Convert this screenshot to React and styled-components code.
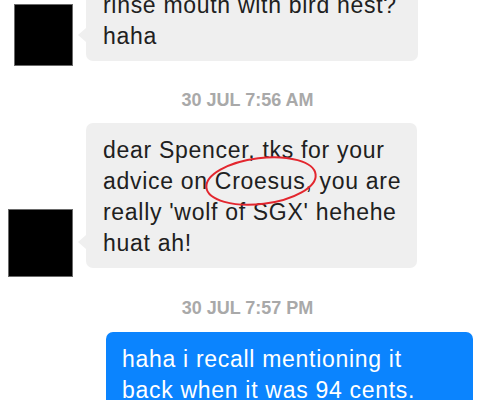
import React from "react";
import styled, { createGlobalStyle } from "styled-components";

const Global = createGlobalStyle`
  html, body { margin: 0; padding: 0; background: #ffffff; }
  body { font-family: "Liberation Sans", Arial, sans-serif; overflow: hidden; }
`;

const Thread = styled.div`
  display: flex;
  flex-direction: column;
  width: 495px;
  height: 400px;
  overflow: hidden;
`;

const Row = styled.div`
  display: flex;
  align-items: flex-end;
  gap: 13px;
  margin-top: ${(p) => p.$top}px;
`;

const AvatarSlot = styled.div`
  width: 73px;
  display: flex;
  justify-content: flex-end;
  flex: none;
`;

const Avatar = styled.div`
  width: ${(p) => p.$w}px;
  height: ${(p) => p.$h}px;
  margin-bottom: ${(p) => -p.$drop}px;
  background: #000;
  box-sizing: border-box;
  border: 1px solid #6a6a6a;
`;

const Bubble = styled.div`
  position: relative;
  box-sizing: border-box;
  width: ${(p) => p.$w}px;
  padding: 12px 8px 9px 17px;
  border-radius: 7px;
  background: ${(p) => (p.$mine ? "#0b84fe" : "#efefef")};
  color: ${(p) => (p.$mine ? "#ffffff" : "#202020")};
  font-size: 23px;
  line-height: 31px;
  letter-spacing: 0.7px;
  white-space: nowrap;
  ${(p) =>
    p.$mine
      ? `margin-left: auto; margin-right: 22px; padding-left: 16px;`
      : `
  &::before {
    content: "";
    position: absolute;
    left: -8px;
    bottom: 19px;
    border-style: solid;
    border-width: 7px 8px 7px 0;
    border-color: transparent #efefef transparent transparent;
  }`}
`;

const Stamp = styled.div`
  margin-top: ${(p) => p.$top}px;
  text-align: center;
  font-size: 18px;
  line-height: 22px;
  font-weight: 700;
  color: #a9a9a9;
`;

const Circled = styled.span`
  position: relative;
`;

const Ring = styled.svg`
  position: absolute;
  left: -11px;
  top: -13px;
  overflow: visible;
  pointer-events: none;
`;

export default function App() {
  return (
    <>
      <Global />
      <Thread>
        <Row $top={-22}>
          <AvatarSlot>
            <Avatar $w={59} $h={62} $drop={5} />
          </AvatarSlot>
          <Bubble $w={332}>
            rinse mouth with bird nest?
            <br />
            haha
          </Bubble>
        </Row>
        <Stamp $top={28}>30 JUL 7:56 AM</Stamp>
        <Row $top={12}>
          <AvatarSlot>
            <Avatar $w={65} $h={68} $drop={9} />
          </AvatarSlot>
          <Bubble $w={331}>
            dear Spencer, tks for your
            <br />
            advice on{" "}
            <Circled>
              Croesus,
              <Ring width="114" height="52" viewBox="0 0 114 52">
                <ellipse
                  cx="57"
                  cy="26"
                  rx="55"
                  ry="23"
                  fill="none"
                  stroke="#e3262e"
                  strokeWidth="2"
                  transform="rotate(-7 57 26)"
                />
              </Ring>
            </Circled>{" "}
            you are
            <br />
            really 'wolf of SGX' hehehe
            <br />
            huat ah!
          </Bubble>
        </Row>
        <Stamp $top={29}>30 JUL 7:57 PM</Stamp>
        <Row $top={13}>
          <Bubble $mine $w={367}>
            haha i recall mentioning it
            <br />
            back when it was 94 cents.
          </Bubble>
        </Row>
      </Thread>
    </>
  );
}
